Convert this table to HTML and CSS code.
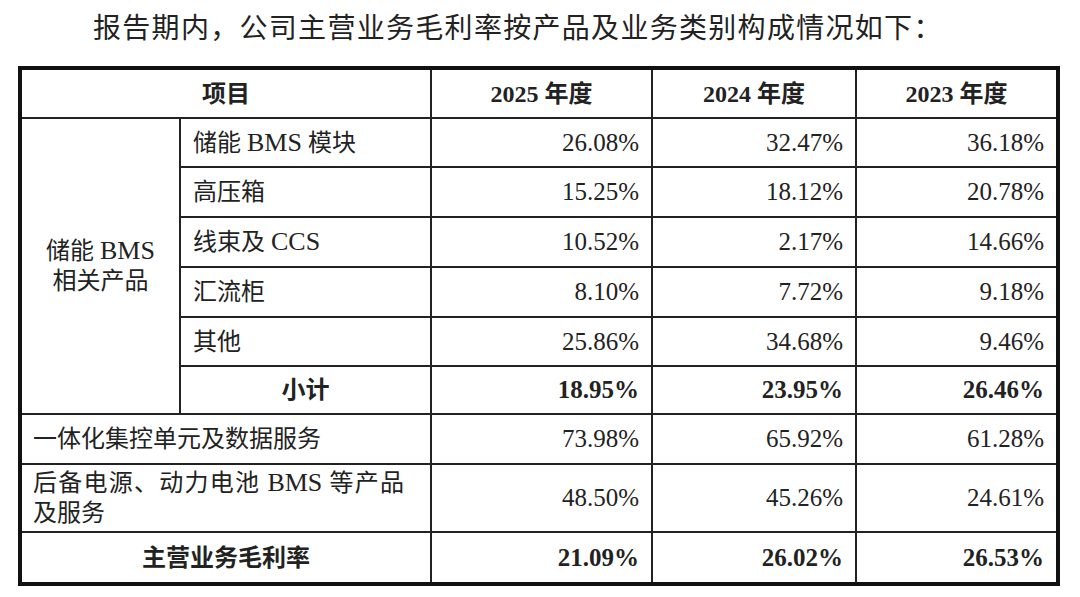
FILE: index.html
```html
<!DOCTYPE html>
<html lang="zh-CN">
<head>
<meta charset="utf-8">
<title>主营业务毛利率</title>
<link rel="stylesheet" href="styles.css">
</head>
<body>
<p class="intro">报告期内，公司主营业务毛利率按产品及业务类别构成情况如下：</p>
<table class="grid">
  <colgroup>
    <col class="c1"><col class="c2"><col class="c3"><col class="c4"><col class="c5">
  </colgroup>
  <thead>
    <tr class="h49">
      <th colspan="2">项目</th>
      <th>2025 年度</th>
      <th>2024 年度</th>
      <th>2023 年度</th>
    </tr>
  </thead>
  <tbody>
    <tr class="h49">
      <td rowspan="6" class="group">储能 <span class="lat">BMS</span><br>相关产品</td>
      <td class="label">储能 <span class="lat">BMS</span> 模块</td>
      <td class="num">26.08%</td><td class="num">32.47%</td><td class="num">36.18%</td>
    </tr>
    <tr class="h50">
      <td class="label">高压箱</td>
      <td class="num">15.25%</td><td class="num">18.12%</td><td class="num">20.78%</td>
    </tr>
    <tr class="h50">
      <td class="label">线束及 <span class="lat">CCS</span></td>
      <td class="num">10.52%</td><td class="num">2.17%</td><td class="num">14.66%</td>
    </tr>
    <tr class="h50">
      <td class="label">汇流柜</td>
      <td class="num">8.10%</td><td class="num">7.72%</td><td class="num">9.18%</td>
    </tr>
    <tr class="h49">
      <td class="label">其他</td>
      <td class="num">25.86%</td><td class="num">34.68%</td><td class="num">9.46%</td>
    </tr>
    <tr class="h48 bold">
      <td class="center">小计</td>
      <td class="num">18.95%</td><td class="num">23.95%</td><td class="num">26.46%</td>
    </tr>
    <tr class="h50">
      <td colspan="2" class="label">一体化集控单元及数据服务</td>
      <td class="num">73.98%</td><td class="num">65.92%</td><td class="num">61.28%</td>
    </tr>
    <tr class="h68">
      <td colspan="2" class="label wrap">
        <div class="just">后备电源、动力电池 <span class="lat">BMS</span> 等产品</div>
        <div>及服务</div>
      </td>
      <td class="num">48.50%</td><td class="num">45.26%</td><td class="num">24.61%</td>
    </tr>
    <tr class="h49 bold">
      <td colspan="2" class="center">主营业务毛利率</td>
      <td class="num">21.09%</td><td class="num">26.02%</td><td class="num">26.53%</td>
    </tr>
  </tbody>
</table>
</body>
</html>
```
FILE: styles.css
```css
html, body {
  margin: 0;
  padding: 0;
  background: #ffffff;
}
body {
  width: 1080px;
  color: #222222;
  font-family: "Liberation Serif", "Noto Sans CJK SC", serif;
}
.intro {
  margin: 12px 0 0 93px;
  font-size: 28px;
  line-height: 34px;
  letter-spacing: 1.3px;
  font-weight: 400;
}
.grid {
  margin: 20px 0 0 18px;
  width: 1042px;
  table-layout: fixed;
  border-collapse: separate;
  border-spacing: 0;
  border: 4px solid #111;
  font-size: 24px;
}
.c1 { width: 159px; }
.c2 { width: 251px; }
.c3 { width: 221px; }
.c4 { width: 204px; }
.c5 { width: 199px; }

.grid th,
.grid td {
  border-right: 2px solid #222;
  border-bottom: 2px solid #222;
  padding: 0 12px;
  vertical-align: middle;
  line-height: 30px;
}
.grid th:last-child,
.grid td:last-child {
  border-right: 0;
}
.grid tbody tr:last-child td {
  border-bottom: 0;
}
.grid th {
  font-weight: 700;
  text-align: center;
  font-size: 24px;
}
.h47 { height: 47px; }
.h48 { height: 48px; }
.h49 { height: 49px; }
.h50 { height: 50px; }
.h68 { height: 68px; }

.lat {
  font-size: 26px;
}
.group {
  text-align: center;
  line-height: 32px;
  padding: 0 4px;
}
.label {
  text-align: left;
}
.grid td.label[colspan] {
  padding-left: 11px;
}
.center {
  text-align: center;
}
.bold td {
  font-weight: 700;
}
.num {
  text-align: right;
  font-size: 25px;
  padding-right: 13px;
}
.wrap .just {
  text-align: justify;
  text-align-last: justify;
  padding-right: 14px;
}
```
